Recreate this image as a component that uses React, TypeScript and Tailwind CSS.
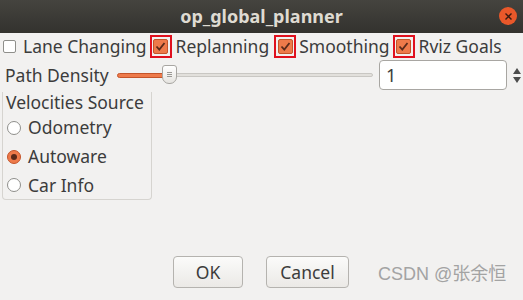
import * as React from "react"

function CheckedBox() {
  return (
    <span className="flex h-[23px] w-[22px] shrink-0 items-center justify-center border-2 border-[#e0101e]">
      <span className="flex h-[15px] w-[15px] items-center justify-center rounded-[2px] border border-[#c4542a] bg-[#ee7a4a]">
        <svg width="11" height="11" viewBox="0 0 11 11">
          <path d="M1.5 5.5 L4.3 8.5 L9.5 2" fill="none" stroke="#5a2a1a" strokeWidth="1.8" />
        </svg>
      </span>
    </span>
  )
}

function Radio({ checked }: { checked?: boolean }) {
  return checked ? (
    <span className="flex h-[14px] w-[14px] items-center justify-center rounded-full border border-[#c4542a] bg-[#ee7a4a]">
      <span className="h-[6px] w-[6px] rounded-full bg-[#5a2a1a]" />
    </span>
  ) : (
    <span className="h-[14px] w-[14px] rounded-full border border-[#8f8f8b] bg-white" />
  )
}

export default function App() {
  return (
    <div
      className="flex h-[300px] w-[523px] flex-col overflow-hidden bg-[#f2f1f0] text-[17.5px] text-[#3c3c3c]"
      style={{ fontFamily: '"Noto Sans", "Noto Sans CJK SC", sans-serif' }}
    >
      {/* Title bar */}
      <div className="relative flex h-[33px] items-center justify-center bg-gradient-to-b from-[#45443f] to-[#33322e]">
        <span className="text-[18px] font-bold text-[#dfdbd2]">op_global_planner</span>
        <span className="absolute right-[6px] top-[7px] flex h-[18px] w-[18px] items-center justify-center rounded-full bg-[#e9582a]">
          <svg width="7" height="7" viewBox="0 0 7 7">
            <path d="M0.5 0.5 L6.5 6.5 M6.5 0.5 L0.5 6.5" stroke="#3a1a10" strokeWidth="1.4" />
          </svg>
        </span>
      </div>

      {/* Checkbox row */}
      <div className="mt-[1px] flex h-[24px] items-center whitespace-nowrap pl-[3px]">
        <span className="h-[13px] w-[13px] shrink-0 rounded-[2px] border border-[#8f8f8b] bg-white" />
        <span className="ml-[7px] mr-[3px]">Lane Changing</span>
        <CheckedBox />
        <span className="ml-[4px] mr-[5px]">Replanning</span>
        <CheckedBox />
        <span className="ml-[3px] mr-[3px]">Smoothing</span>
        <CheckedBox />
        <span className="ml-[4px]">Rviz Goals</span>
      </div>

      {/* Path density row */}
      <div className="mt-[1px] flex h-[32px] items-center">
        <span className="ml-[5px] w-[112px]">Path Density</span>
        <div className="relative flex h-[20px] w-[256px] items-center">
          <div className="h-[5px] w-[50px] rounded-l-full border border-[#c4542a] bg-[#ee7a4a]" />
          <div className="h-[4px] flex-1 rounded-r-full border border-[#c9c7c3] bg-[#e2e0dc]" />
          <span className="absolute left-[45px] top-0 flex h-[19px] w-[15px] flex-col items-center justify-center gap-[1px] rounded-t-[3px] rounded-b-[7px] border border-[#a8a6a2] bg-gradient-to-b from-white to-[#e6e4e0]">
            <span className="h-px w-[5px] bg-[#9a9894]" />
            <span className="h-px w-[5px] bg-[#9a9894]" />
            <span className="h-px w-[5px] bg-[#9a9894]" />
          </span>
        </div>
        <div className="ml-[6px] flex h-[30px] w-[128px] items-center rounded-[4px] border border-[#a8a6a2] bg-white pl-[6px] text-[18px]">
          1
        </div>
        <div className="ml-[6px] flex flex-col items-center gap-[3px]">
          <svg width="8" height="6" viewBox="0 0 8 6"><path d="M4 0 L8 6 L0 6Z" fill="#4c4c4c" /></svg>
          <svg width="8" height="6" viewBox="0 0 8 6"><path d="M0 0 L8 0 L4 6Z" fill="#4c4c4c" /></svg>
        </div>
      </div>

      {/* Velocities group */}
      <div className="ml-[2px] mt-[1px] flex h-[108px] w-[150px] flex-col rounded-b-[4px] border-x border-b border-[#d6d4d0]">
        <span className="-ml-[1px] pl-[4px] leading-[20px]">Velocities Source</span>
        <div className="mt-[1px] flex h-[29px] items-center pl-[4px]">
          <Radio />
          <span className="ml-[7px]">Odometry</span>
        </div>
        <div className="flex h-[29px] items-center pl-[4px]">
          <Radio checked />
          <span className="ml-[7px]">Autoware</span>
        </div>
        <div className="flex h-[28px] items-center pl-[4px]">
          <Radio />
          <span className="ml-[7px]">Car Info</span>
        </div>
      </div>

      {/* Buttons */}
      <div className="mt-auto mb-[12px] flex items-center">
        <button className="ml-[173px] h-[32px] w-[70px] rounded-[4px] border border-[#b5b3af] bg-gradient-to-b from-[#fbfbfa] to-[#ebe9e6] text-[17.5px]">
          OK
        </button>
        <button className="ml-[23px] h-[32px] w-[83px] rounded-[4px] border border-[#b5b3af] bg-gradient-to-b from-[#fbfbfa] to-[#ebe9e6] text-[17.5px]">
          Cancel
        </button>
        <span
          className="ml-[29px] mt-[4px] text-[18px] text-[#a3a3a3]"
          style={{ fontFamily: '"Liberation Sans", "Noto Sans CJK SC", sans-serif' }}
        >
          CSDN @张余恒
        </span>
      </div>
    </div>
  )
}
